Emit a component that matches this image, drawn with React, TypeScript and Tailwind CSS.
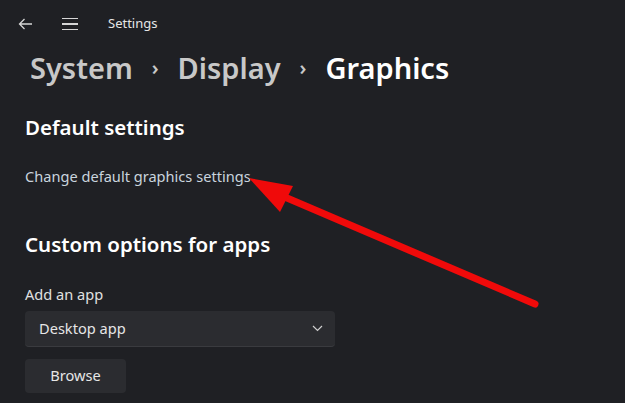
export default function App() {
  return (
    <div className="relative w-[625px] h-[403px] overflow-hidden bg-[#1f2024] text-white font-['Noto_Sans',sans-serif]">
      <div className="flex items-center h-[48px] pl-[18px]">
        <svg width="15" height="12" viewBox="0 0 15 12" className="text-[#d6d6d6]">
          <path d="M14 6H1.5M6.5 1L1.5 6l5 5" fill="none" stroke="currentColor" strokeWidth="1.3" />
        </svg>
        <div className="ml-[29px] flex flex-col gap-[4px]">
          <span className="block w-[16px] h-[1.5px] bg-[#d6d6d6]" />
          <span className="block w-[16px] h-[1.5px] bg-[#d6d6d6]" />
          <span className="block w-[16px] h-[1.5px] bg-[#d6d6d6]" />
        </div>
        <span className="ml-[30px] text-[13px] text-[#e6e6e6]">Settings</span>
      </div>

      <div className="pl-[30px] mt-0 flex items-center text-[29px] font-semibold leading-[40px]">
        <span className="text-[#c8c8c8]">System</span>
        <span className="mx-[19px] text-[20px] text-[#c8c8c8]">›</span>
        <span className="text-[#c8c8c8]">Display</span>
        <span className="mx-[19px] text-[20px] text-[#c8c8c8]">›</span>
        <span className="text-white">Graphics</span>
      </div>

      <div className="pl-[25px] mt-[25px]">
        <h2 className="text-[20.5px] font-semibold leading-[28px]">Default settings</h2>
        <p className="mt-[25px] text-[14.6px] text-[#c9d4de] leading-[20px]">Change default graphics settings</p>
        <h2 className="mt-[44px] text-[20.5px] font-semibold leading-[28px]">Custom options for apps</h2>
        <p className="mt-[26px] text-[14.6px] text-[#e0e0e0] leading-[20px]">Add an app</p>
        <div className="mt-[7px] w-[310px] h-[36px] flex items-center justify-between pl-[14px] pr-[12px] bg-[#2b2c30] rounded-[4px] border-b border-[#3a3b3f]">
          <span className="text-[14.6px] text-[#e6e6e6]">Desktop app</span>
          <svg width="11" height="7" viewBox="0 0 11 7">
            <path d="M1 1l4.5 4.5L10 1" fill="none" stroke="#cfcfcf" strokeWidth="1.2" />
          </svg>
        </div>
        <button className="mt-[12px] w-[101px] h-[34px] bg-[#2b2c30] rounded-[4px] text-[14.6px] text-[#e6e6e6]">Browse</button>
      </div>

      <svg className="absolute left-0 top-0 pointer-events-none" width="625" height="403" viewBox="0 0 625 403">
        <line x1="535" y1="304" x2="280" y2="195" stroke="#f00a0a" strokeWidth="7" strokeLinecap="round" />
        <polygon points="249,178 293,186 280,212" fill="#f00a0a" />
      </svg>
    </div>
  )
}
